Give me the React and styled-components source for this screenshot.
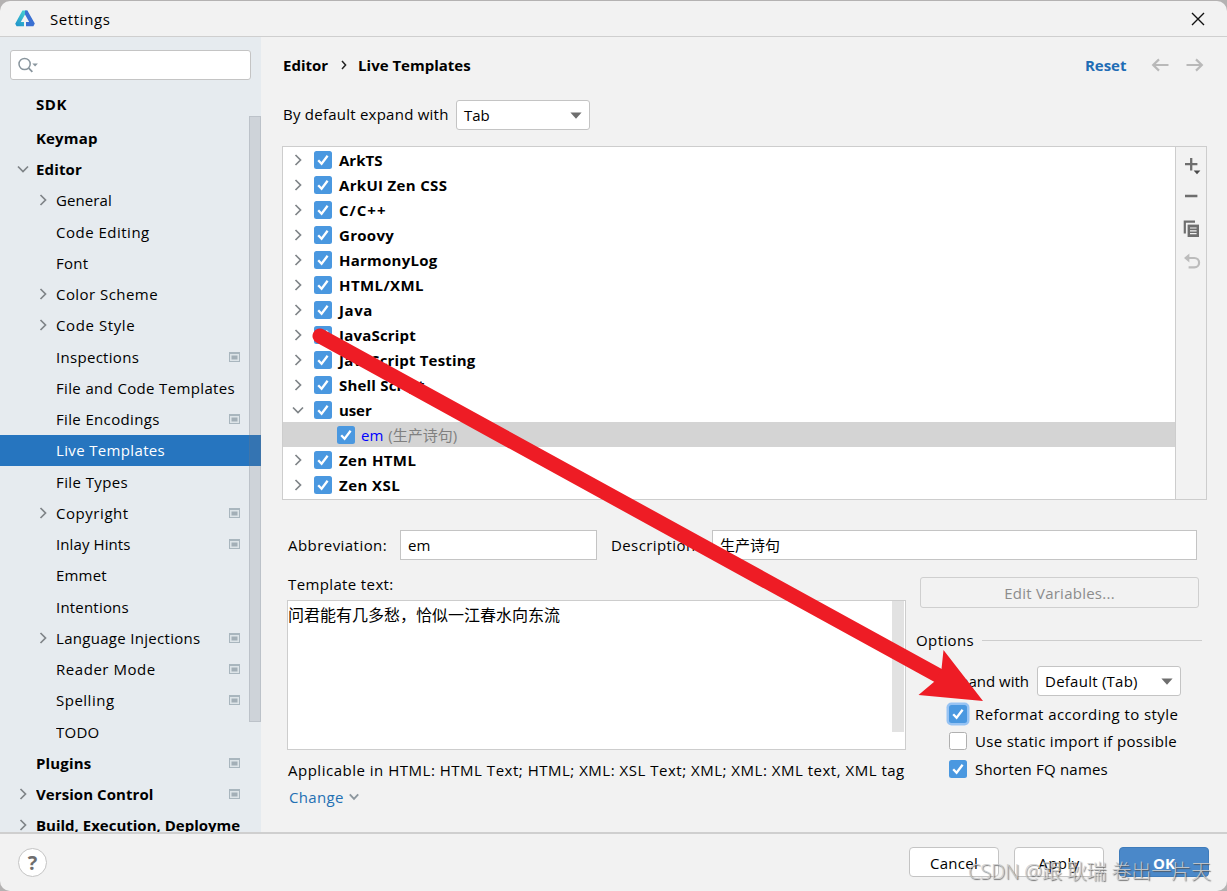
import styled, { createGlobalStyle, css } from "styled-components";

const navItems = [
  { label: "Editor", top: true, arrow: "down", spacing: 0.15 },
  { label: "General", arrow: "right", spacing: 0.1 },
  { label: "Code Editing", spacing: 0.5 },
  { label: "Font", spacing: 0.3 },
  { label: "Color Scheme", arrow: "right", spacing: 0.45 },
  { label: "Code Style", arrow: "right", spacing: 0.6 },
  { label: "Inspections", project: true, spacing: 0.3 },
  { label: "File and Code Templates", spacing: 0.35 },
  { label: "File Encodings", project: true, spacing: 0.35 },
  { label: "Live Templates", selected: true, spacing: 0.35 },
  { label: "File Types", spacing: 0.4 },
  { label: "Copyright", arrow: "right", project: true, spacing: 0.55 },
  { label: "Inlay Hints", project: true, spacing: 0.1 },
  { label: "Emmet", spacing: 0.2 },
  { label: "Intentions", spacing: 0.2 },
  { label: "Language Injections", arrow: "right", project: true, spacing: 0.3 },
  { label: "Reader Mode", project: true, spacing: 0.55 },
  { label: "Spelling", project: true, spacing: 0.5 },
  { label: "TODO", spacing: 0.25 },
  { label: "Plugins", top: true, project: true, spacing: 0.15 },
  {
    label: "Version Control",
    top: true,
    arrow: "right",
    project: true,
    spacing: 0.07,
  },
  { label: "Build, Execution, Deployment", top: true, arrow: "right" },
];

const groups = [
  { label: "ArkTS" },
  { label: "ArkUI Zen CSS", spacing: 0.32 },
  { label: "C/C++", spacing: 1 },
  { label: "Groovy", spacing: 0.3 },
  { label: "HarmonyLog", spacing: 0.25 },
  { label: "HTML/XML", spacing: 0.4 },
  { label: "Java", spacing: 0.6 },
  { label: "JavaScript", spacing: 0.2 },
  { label: "JavaScript Testing", spacing: 0.17 },
  { label: "Shell Script", spacing: 0.2 },
  { label: "user", open: true, spacing: -0.1 },
  { label: "em", note: "(生产诗句)", child: true },
  { label: "Zen HTML", spacing: 0.4 },
  { label: "Zen XSL", spacing: 0.45 },
];

const Chevron = ({ dir }) => (
  <svg width="14" height="14" viewBox="0 0 14 14" fill="none">
    {dir && (
      <path
        d={dir === "down" ? "M2 4.5 L7 9.5 L12 4.5" : "M4.5 2 L9.5 7 L4.5 12"}
        stroke="#7f8488"
        strokeWidth="1.7"
      />
    )}
  </svg>
);

const Tick = () => (
  <svg width="18" height="18" viewBox="0 0 18 18" fill="none">
    <path d="M4.2 9.2 L7.6 12.8 L13.6 4.8" stroke="#fff" strokeWidth="2.3" />
  </svg>
);

const ProjectIcon = () => (
  <svg width="11" height="10" viewBox="0 0 11 10">
    <rect width="11" height="10" fill="#a9b6be" />
    <rect x="1" y="2" width="9" height="7" fill="#dde4e8" />
    <rect x="2.5" y="3.5" width="6" height="4" fill="#a3afb7" />
  </svg>
);

const Logo = () => (
  <svg width="20" height="17" viewBox="0 0 20 17">
    <defs>
      <linearGradient id="logoLeft" x1="0" y1="1" x2="0.7" y2="0">
        <stop offset="0" stopColor="#1d8fc9" />
        <stop offset="1" stopColor="#45cfd2" />
      </linearGradient>
    </defs>
    <path
      d="M7.4 0.6 H12.2 L13.2 2.4 L10 4.6 L5.8 12 H9 V16.2 H1.6 L0.2 13.8 Z"
      fill="url(#logoLeft)"
    />
    <path
      d="M10 0.6 H12.4 L19.8 13.6 L18.4 16.2 H11 V12 H14.2 L10 4.4 Z"
      fill="#3a70d2"
    />
  </svg>
);

const SearchIcon = () => (
  <svg width="22" height="18" viewBox="0 0 22 18" fill="none">
    <circle cx="6.6" cy="8" r="5.6" stroke="#8a969e" strokeWidth="1.5" />
    <path d="M10.6 12.2 L14.4 15.8" stroke="#8a969e" strokeWidth="1.8" />
    <path d="M14.3 7.6 H19.9 L17.1 10.6 Z" fill="#8a969e" />
  </svg>
);

const AddIcon = () => (
  <svg width="18" height="20" viewBox="0 0 18 20">
    <path d="M2 8.2 H14.4 M8.2 2 V14.4" stroke="#6e6e6e" strokeWidth="2.3" />
    <path d="M10.6 14.6 H17.4 L14 18.2 Z" fill="#4a4a4a" />
  </svg>
);

const RemoveIcon = () => (
  <svg width="18" height="4" viewBox="0 0 18 4">
    <path d="M2 2 H14.4" stroke="#6e6e6e" strokeWidth="2.3" />
  </svg>
);

const CopyIcon = () => (
  <svg width="18" height="18" viewBox="0 0 18 18" fill="none">
    <path d="M12 1.7 H1.8 V13.5" stroke="#6e6e6e" strokeWidth="2.2" />
    <rect x="4.6" y="4.6" width="11.4" height="12.4" fill="#6e6e6e" />
    <path
      d="M7 8 H13.6 M7 10.8 H13.6 M7 13.6 H13.6"
      stroke="#f2f2f2"
      strokeWidth="1.2"
    />
  </svg>
);

const UndoIcon = () => (
  <svg width="18" height="18" viewBox="0 0 18 18" fill="none">
    <path
      d="M5 6 H11.4 A4.7 4.7 0 0 1 11.4 15.4 H5.6"
      stroke="#bcbcbc"
      strokeWidth="2.2"
    />
    <path d="M6.4 1.4 V10.6 L1 6 Z" fill="#bcbcbc" />
  </svg>
);

const NavArrow = ({ flip }) => (
  <svg width="18" height="14" viewBox="0 0 18 14" fill="none">
    <path
      d={
        flip
          ? "M0.5 7 H15.5 M10 1.4 L15.8 7 L10 12.6"
          : "M17.5 7 H2.5 M8 1.4 L2.2 7 L8 12.6"
      }
      stroke="#b9b9b9"
      strokeWidth="2.2"
    />
  </svg>
);

const DropArrow = () => (
  <svg width="12" height="7" viewBox="0 0 12 7">
    <path d="M0.4 0.4 H11.6 L6 6.8 Z" fill="#6e6e6e" />
  </svg>
);

const NavItem = ({ item }) => (
  <NavRow $selected={item.selected}>
    <NavArrowSlot $top={item.top}>
      <Chevron dir={item.arrow} />
    </NavArrowSlot>
    <NavLabel $bold={item.top} $spacing={item.spacing}>
      {item.label}
    </NavLabel>
    {item.project && <ProjectIcon />}
  </NavRow>
);

const Group = ({ group }) => (
  <GroupRow $child={group.child}>
    {!group.child && <Chevron dir={group.open ? "down" : "right"} />}
    <CheckBox $checked>
      <Tick />
    </CheckBox>
    <GroupLabel $child={group.child} $spacing={group.spacing}>
      {group.label}
    </GroupLabel>
    {group.note && <Note>{group.note}</Note>}
  </GroupRow>
);

function App() {
  return (
    <Backdrop>
      <GlobalStyle />
      <Window>
        <TitleBar>
          <Logo />
          <Title $spacing={0.6}>Settings</Title>
          <svg width="14" height="14" viewBox="0 0 14 14">
            <path
              d="M1 1 L13 13 M13 1 L1 13"
              stroke="#111"
              strokeWidth="1.4"
            />
          </svg>
        </TitleBar>

        <Body>
          <Sidebar>
            <SearchBox>
              <SearchIcon />
            </SearchBox>
            <NavTree>
              <NavHeading $line={33} $spacing={0.6}>
                SDK
              </NavHeading>
              <NavHeading $line={35} $spacing={0.15}>
                Keymap
              </NavHeading>
              {navItems.map((item) => (
                <NavItem key={item.label} item={item} />
              ))}
              <NavScroll />
            </NavTree>
          </Sidebar>

          <Main>
            <Crumbs>
              <Crumb>Editor</Crumb>
              <svg width="6" height="10" viewBox="0 0 6 10" fill="none">
                <path d="M1 1 L4.6 5 L1 9" stroke="#222" strokeWidth="1.5" />
              </svg>
              <Crumb>Live Templates</Crumb>
              <Reset>Reset</Reset>
              <NavArrow />
              <NavArrow flip />
            </Crumbs>

            <ExpandRow>
              <ExpandLabel $spacing={0.24}>By default expand with</ExpandLabel>
              <Select $width={134}>
                Tab
                <DropArrow />
              </Select>
            </ExpandRow>

            <TemplatePanel>
              <GroupList>
                {groups.map((group) => (
                  <Group key={group.label} group={group} />
                ))}
              </GroupList>
              <Toolbar>
                <AddIcon />
                <RemoveIcon />
                <CopyIcon />
                <UndoIcon />
              </Toolbar>
            </TemplatePanel>

            <FieldRow>
              <FieldLabel $width={112} $spacing={0.45}>
                Abbreviation:
              </FieldLabel>
              <Field $width={197}>em</Field>
              <FieldLabel $width={101} $spacing={0.4}>
                Description:
              </FieldLabel>
              <Field $width={485}>生产诗句</Field>
            </FieldRow>

            <Details>
              <TextColumn>
                <TextLabel $spacing={0.37}>Template text:</TextLabel>
                <TextArea>
                  问君能有几多愁，恰似一江春水向东流
                  <TextScroll />
                </TextArea>
                <Applicable $spacing={0.51}>
                  Applicable in HTML: HTML Text; HTML; XML: XSL Text; XML; XML:
                  XML text, XML tag
                </Applicable>
                <Change $spacing={0.35}>
                  Change
                  <svg width="10" height="8" viewBox="0 0 10 8" fill="none">
                    <path
                      d="M0.8 1.4 L5 5.8 L9.2 1.4"
                      stroke="#8d979e"
                      strokeWidth="1.9"
                    />
                  </svg>
                </Change>
              </TextColumn>

              <OptionsColumn>
                <EditVariables $spacing={0.25}>Edit Variables...</EditVariables>
                <OptionsHeader $spacing={0.4}>Options</OptionsHeader>
                <OptionExpand>
                  <span>Expand with</span>
                  <Select $width={144} $spacing={0.25}>
                    Default (Tab)
                    <DropArrow />
                  </Select>
                </OptionExpand>
                <Option $spacing={0.42}>
                  <CheckBox $checked $focus>
                    <Tick />
                  </CheckBox>
                  Reformat according to style
                </Option>
                <Option $spacing={0.31}>
                  <CheckBox />
                  Use static import if possible
                </Option>
                <Option $spacing={0.2}>
                  <CheckBox $checked>
                    <Tick />
                  </CheckBox>
                  Shorten FQ names
                </Option>
              </OptionsColumn>
            </Details>
          </Main>
        </Body>

        <Footer>
          <Help>?</Help>
          <FooterButton $spacing={0.3}>Cancel</FooterButton>
          <FooterButton $spacing={0.5}>Apply</FooterButton>
          <FooterButton $primary>OK</FooterButton>
        </Footer>
      </Window>

      <PointerArrow viewBox="0 0 1227 891">
        <path d="M320 336 L940 676.5" />
        <polygon points="943.5,650 983,701 918.5,695 934.5,681.5 941.5,669" />
      </PointerArrow>
      <Watermark>CSDN @跟 耿瑞 卷出一片天</Watermark>
    </Backdrop>
  );
}

export default App;

const GlobalStyle = createGlobalStyle`
  * {
    box-sizing: border-box;
  }

  body {
    margin: 0;
    overflow: hidden;
    font-family: "Open Sans", "Noto Sans CJK SC", sans-serif;
    font-size: 15px;
    color: #000;
    white-space: nowrap;
  }

  svg {
    display: block;
    flex-shrink: 0;
  }
`;

const spaced = css`
  letter-spacing: ${({ $spacing }) => $spacing || 0}px;
`;

const Backdrop = styled.div`
  position: relative;
  width: 1227px;
  height: 891px;
  padding-top: 1px;
  background: #b4b2b2;
  overflow: hidden;
`;

const Window = styled.div`
  display: flex;
  flex-direction: column;
  height: 890px;
  background: #f2f2f2;
  border-radius: 10px;
  overflow: hidden;
`;

const TitleBar = styled.div`
  display: flex;
  align-items: center;
  height: 36px;
  padding: 0 22px 0 15px;
  border-bottom: 1px solid #cfcfcf;
`;

const Title = styled.div`
  flex: 1;
  margin-left: 15px;
  ${spaced}
`;

const Body = styled.div`
  display: flex;
  height: 795px;
`;

const Sidebar = styled.div`
  display: flex;
  flex-direction: column;
  width: 261px;
  padding-top: 13px;
  background: #e6ebef;
  overflow: hidden;
`;

const SearchBox = styled.div`
  display: flex;
  align-items: center;
  flex-shrink: 0;
  width: 241px;
  height: 30px;
  margin-left: 10px;
  padding-left: 7px;
  background: #fff;
  border: 1px solid #c4c4c4;
  border-radius: 3px;
`;

const NavTree = styled.div`
  position: relative;
  flex: 1;
  padding-top: 7.5px;
  overflow: hidden;
`;

const NavHeading = styled.div`
  height: 33px;
  padding-left: 36px;
  line-height: ${({ $line }) => $line}px;
  font-weight: 700;
  ${spaced}
`;

const NavRow = styled.div`
  display: flex;
  align-items: center;
  height: 31.25px;
  padding-right: 21px;
  background: ${({ $selected }) => ($selected ? "#2675bf" : "transparent")};
  color: ${({ $selected }) => ($selected ? "#fff" : "#000")};
`;

const NavArrowSlot = styled.div`
  flex-shrink: 0;
  width: ${({ $top }) => ($top ? 36 : 56)}px;
  padding-left: ${({ $top }) => ($top ? 16 : 36)}px;
`;

const NavLabel = styled.div`
  flex: 1;
  overflow: hidden;
  font-weight: ${({ $bold }) => ($bold ? 700 : 400)};
  ${spaced}
`;

const NavScroll = styled.div`
  position: absolute;
  top: 36px;
  right: 0;
  width: 12px;
  height: 606px;
  background: rgba(112, 116, 128, 0.2);
  border: 1px solid rgba(112, 116, 128, 0.18);
`;

const Main = styled.div`
  flex: 1;
  padding-left: 22px;
`;

const Crumbs = styled.div`
  display: flex;
  align-items: center;
  height: 56px;
  padding-right: 23px;
  font-weight: 700;

  > svg {
    margin-left: 17px;
  }
`;

const Crumb = styled.div`
  & + svg {
    margin: 0 11px 0 13px;
  }
`;

const Reset = styled.div`
  margin-left: auto;
  margin-right: 7.5px;
  color: #1f6db5;
`;

const ExpandRow = styled.div`
  display: flex;
  align-items: center;
  height: 44px;
`;

const ExpandLabel = styled.div`
  width: 173px;
  padding-bottom: 2px;
  ${spaced}
`;

const Select = styled.div`
  display: flex;
  align-items: center;
  justify-content: space-between;
  width: ${({ $width }) => $width}px;
  height: 30px;
  padding: 0 7px;
  background: #fff;
  border: 1px solid #c4c4c4;
  border-radius: 3px;
  ${spaced}
`;

const TemplatePanel = styled.div`
  display: flex;
  width: 925px;
  height: 354px;
  margin: 9px 0 0 -1px;
  border: 1px solid #cdcdcd;
`;

const GroupList = styled.div`
  flex: 1;
  background: #fff;
`;

const GroupRow = styled.div`
  display: flex;
  align-items: center;
  height: 25px;
  padding-left: ${({ $child }) => ($child ? 54 : 8)}px;
  background: ${({ $child }) => ($child ? "#d4d4d4" : "transparent")};

  > svg {
    margin-right: 9px;
  }
`;

const CheckBox = styled.div`
  flex-shrink: 0;
  width: 18px;
  height: 18px;
  background: ${({ $checked }) => ($checked ? "#4a98e0" : "#fff")};
  border-radius: 2.5px;
  box-shadow: ${({ $focus }) => ($focus ? "0 0 0 2.5px #97c3f3" : "none")};

  ${({ $checked }) =>
    !$checked &&
    css`
      border: 1px solid #b0b0b0;
    `}
`;

const GroupLabel = styled.div`
  margin-left: ${({ $child }) => ($child ? 6 : 7)}px;
  font-weight: ${({ $child }) => ($child ? 400 : 700)};
  color: ${({ $child }) => ($child ? "#0000ff" : "#000")};
  ${spaced}
`;

const Note = styled.div`
  margin-left: 5px;
  color: #808080;
`;

const Toolbar = styled.div`
  display: flex;
  flex-direction: column;
  align-items: flex-start;
  width: 31px;
  padding: 9px 0 0 7px;
  border-left: 1px solid #cdcdcd;

  > svg:nth-child(2) {
    margin-top: 18px;
  }

  > svg:nth-child(3) {
    margin-top: 22px;
  }

  > svg:nth-child(4) {
    margin-top: 14px;
  }
`;

const FieldRow = styled.div`
  display: flex;
  align-items: center;
  margin-top: 30px;
  padding-left: 5px;
`;

const FieldLabel = styled.div`
  width: ${({ $width }) => $width}px;
  ${spaced}

  &:nth-child(3) {
    margin-left: 14px;
  }
`;

const Field = styled.div`
  width: ${({ $width }) => $width}px;
  height: 30px;
  padding-left: 7px;
  line-height: 28px;
  background: #fff;
  border: 1px solid #c4c4c4;
`;

const Details = styled.div`
  display: flex;
`;

const TextColumn = styled.div`
  width: 624px;
  padding: 10px 0 0 4px;
`;

const TextLabel = styled.div`
  height: 30px;
  padding-left: 1px;
  line-height: 28px;
  ${spaced}
`;

const TextArea = styled.div`
  position: relative;
  width: 619px;
  height: 150px;
  font-size: 16px;
  line-height: 28px;
  background: #fff;
  border: 1px solid #cdcdcd;
`;

const TextScroll = styled.div`
  position: absolute;
  top: 0;
  right: 1px;
  width: 12px;
  height: 131px;
  background: #e2e2e2;
`;

const Applicable = styled.div`
  height: 27px;
  margin-top: 7px;
  padding-left: 1px;
  line-height: 27px;
  overflow: hidden;
  ${spaced}
`;

const Change = styled.div`
  display: flex;
  align-items: center;
  gap: 5px;
  height: 25px;
  padding-left: 2px;
  color: #2470b3;
  ${spaced}
`;

const OptionsColumn = styled.div`
  padding: 17px 0 0 9px;
`;

const EditVariables = styled.div`
  width: 279px;
  height: 31px;
  margin-left: 4px;
  line-height: 30px;
  text-align: center;
  color: #8c8c8c;
  border: 1px solid #cfcfcf;
  border-radius: 3px;
  ${spaced}
`;

const OptionsHeader = styled.div`
  display: flex;
  align-items: center;
  width: 286px;
  height: 30px;
  margin: 17px 0 11px;
  ${spaced}

  &::after {
    content: "";
    flex: 1;
    height: 1px;
    margin-left: 8px;
    background: #cdcdcd;
  }
`;

const OptionExpand = styled.div`
  display: flex;
  align-items: center;
  justify-content: flex-end;
  gap: 8px;
  width: 265px;
  height: 30px;
  margin-bottom: 4px;
`;

const Option = styled.div`
  display: flex;
  align-items: center;
  gap: 8px;
  height: 27.5px;
  padding-left: 33px;
  ${spaced}
`;

const Footer = styled.div`
  display: flex;
  align-items: center;
  flex: 1;
  padding: 0 18px 1px;
  border-top: 2px solid #cfcfcf;
`;

const Help = styled.div`
  width: 29px;
  height: 29px;
  margin-right: auto;
  line-height: 27px;
  text-align: center;
  font-size: 20px;
  font-weight: 700;
  color: #6e6e6e;
  background: #fff;
  border: 1px solid #c4c4c4;
  border-radius: 50%;
`;

const FooterButton = styled.div`
  width: 90px;
  height: 30px;
  margin-left: 15px;
  line-height: 30px;
  text-align: center;
  font-weight: ${({ $primary }) => ($primary ? 700 : 400)};
  color: ${({ $primary }) => ($primary ? "#fff" : "#000")};
  background: ${({ $primary }) => ($primary ? "#4a88c9" : "#fff")};
  border: 1px solid ${({ $primary }) => ($primary ? "#3f7cbb" : "#c4c4c4")};
  border-radius: 4px;
  ${spaced}
`;

const PointerArrow = styled.svg`
  position: absolute;
  inset: 0;
  width: 1227px;
  height: 891px;

  path {
    stroke: #ee1c25;
    stroke-width: 15;
    stroke-linecap: round;
  }

  polygon {
    fill: #ee1c25;
  }
`;

const Watermark = styled.div`
  position: absolute;
  left: 968px;
  top: 858px;
  font-size: 20px;
  font-weight: 300;
  line-height: 28px;
  letter-spacing: -0.15px;
  color: rgba(205, 205, 205, 0.9);
  text-shadow: 1px 1px 1px rgba(80, 80, 80, 0.8);
`;
